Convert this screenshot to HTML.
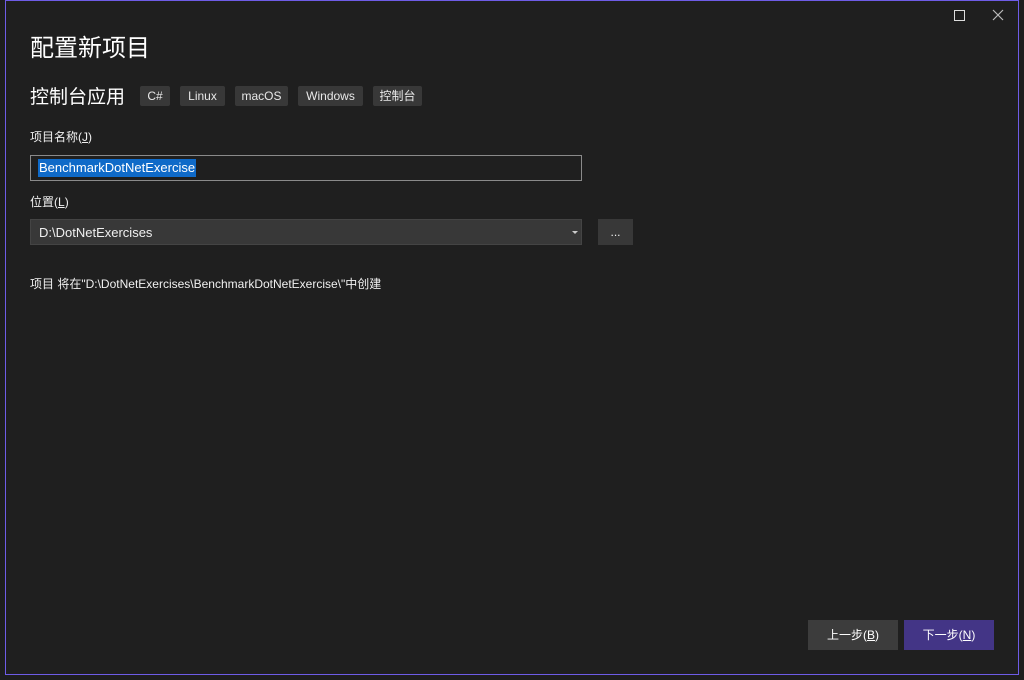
<!DOCTYPE html><html><head><style>
body{margin:0;width:1024px;height:680px;background:#1e1e1e;overflow:hidden;font-family:"Liberation Sans","Noto Sans CJK SC",sans-serif;color:#f0f0f0;position:relative}
.dlg{position:absolute;left:5px;top:0;width:1012px;height:673px;border:1px solid #6e5ce6;background:#1f1f1f}
.a{position:absolute}
.tag{position:absolute;top:86px;height:20px;background:#383838;border-radius:2px;font-size:12px;line-height:20px;text-align:center;color:#e8e8e8}
.lbl{font-size:12px;color:#f0f0f0}
.btn{position:absolute;top:620px;width:90px;height:30px;font-size:12px;line-height:30px;text-align:center;color:#fff}
</style></head><body>
<div class="dlg"></div>
<div class="a" style="left:954px;top:10px;width:9px;height:9px;border:1px solid #ddd"></div>
<svg class="a" style="left:992px;top:9px" width="12" height="12"><path d="M1 1L11 11M11 1L1 11" stroke="#bbb" stroke-width="1.2"/></svg>
<div class="a" style="left:30px;top:28px;font-size:24px;color:#fff">配置新项目</div>
<div class="a" style="left:30px;top:82px;font-size:19px;color:#fff">控制台应用</div>
<div class="tag" style="left:140px;width:30px">C#</div>
<div class="tag" style="left:180px;width:45px">Linux</div>
<div class="tag" style="left:235px;width:53px">macOS</div>
<div class="tag" style="left:298px;width:65px">Windows</div>
<div class="tag" style="left:373px;width:49px">控制台</div>
<div class="a lbl" style="left:30px;top:128px">项目名称(<u>J</u>)</div>
<div class="a" style="left:30px;top:155px;width:550px;height:24px;border:1px solid #8a8a8a;background:#1f1f1f"></div>
<div class="a" style="left:38px;top:159px;height:18px;background:#0f6ac8;color:#fff;font-size:13px;line-height:18px;padding:0 1px">BenchmarkDotNetExercise</div>
<div class="a lbl" style="left:30px;top:193px">位置(<u>L</u>)</div>
<div class="a" style="left:30px;top:219px;width:550px;height:24px;border:1px solid #444;background:#383838"></div>
<div class="a" style="left:39px;top:225px;font-size:13px">D:\DotNetExercises</div>
<div class="a" style="left:572px;top:231px;width:0;height:0;border-left:3px solid transparent;border-right:3px solid transparent;border-top:3px solid #ccc"></div>
<div class="a" style="left:598px;top:219px;width:35px;height:26px;background:#383838;font-size:12px;text-align:center;line-height:26px">...</div>
<div class="a lbl" style="left:30px;top:275px">项目 将在"D:\DotNetExercises\BenchmarkDotNetExercise\"中创建</div>
<div class="btn" style="left:808px;background:#3c3c3c">上一步(<u>B</u>)</div>
<div class="btn" style="left:904px;background:#433586">下一步(<u>N</u>)</div>
</body></html>
